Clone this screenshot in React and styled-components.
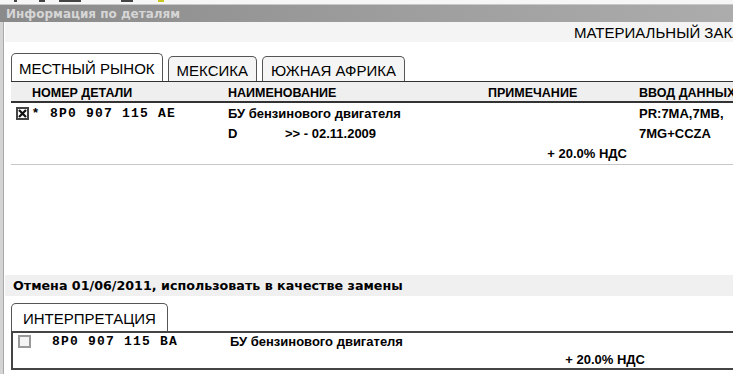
import React from "react";
import styled, { createGlobalStyle } from "styled-components";

const Global = createGlobalStyle`
  html, body { margin: 0; padding: 0; background: #ffffff; }
  body { font-family: "Liberation Sans", Arial, sans-serif; color: #000; }
  * { box-sizing: border-box; }
`;

const Window = styled.div`
  width: 733px;
  height: 374px;
  overflow: hidden;
  display: flex;
  flex-direction: column;
  background: #fff;
`;

const TopStrip = styled.div`
  height: 5px;
  display: flex;
  align-items: flex-start;
  background: #f6f6f6;
  border-bottom: 1px solid #c8c8c8;
  padding-left: 14px;
`;

const Mark = styled.span`
  display: block;
  height: 2px;
  width: ${(p) => p.$w}px;
  margin-left: ${(p) => p.$gap}px;
  background: ${(p) => p.$c || "#444"};
`;

const TitleBar = styled.div`
  height: 17px;
  display: flex;
  align-items: center;
  padding-left: 6px;
  background: linear-gradient(to right, #8a8a8a, #9c9c9c 50%, #acacac);
  color: #d6d6d6;
  font-family: "DejaVu Sans", Verdana, sans-serif;
  font-weight: bold;
  font-size: 12px;
  white-space: nowrap;
`;

const Frame = styled.div`
  flex: 1;
  display: flex;
  flex-direction: column;
  border-left: 3px solid #d4d4d4;
  box-shadow: inset 1px 0 0 #a8a8a8;
  padding-left: 2px;
`;

const InfoBar = styled.div`
  height: 20px;
  display: flex;
  align-items: center;
  padding-left: 569px;
  background: #f4f4f4;
  font-size: 15px;
  white-space: nowrap;
  overflow: hidden;
`;

const Content = styled.div`
  display: flex;
  flex-direction: column;
  padding-left: 6px;
`;

const TabRow = styled.div`
  display: flex;
  align-items: flex-end;
  gap: 5px;
  margin-top: ${(p) => p.$top || 0}px;
  height: 28px;
`;

const Tab = styled.div`
  height: ${(p) => (p.$active ? 28 : 25)}px;
  display: flex;
  align-items: center;
  padding: 0 ${(p) => p.$px || 8}px;
  border: 1px solid #555;
  border-bottom: none;
  border-radius: 5px 5px 0 0;
  background: ${(p) => (p.$active ? "#ffffff" : "#f5f5f5")};
  font-size: 15px;
  white-space: nowrap;
  padding-top: ${(p) => (p.$active ? 1 : 2)}px;
`;

const Table = styled.div`
  display: flex;
  flex-direction: column;
  border-top: 1px solid #333;
`;

const cols = "39px 178px 260px 151px 220px";

const HeaderRow = styled.div`
  height: 21px;
  display: grid;
  grid-template-columns: ${cols};
  align-items: center;
  background: #efefef;
  border-bottom: 2px solid #333;
  font-size: 12.5px;
  font-weight: bold;
  white-space: nowrap;
`;

const HeadCell = styled.div`
  grid-column: ${(p) => p.$span || "auto"};
  padding-left: ${(p) => p.$pad || 0}px;
  padding-top: 2px;
`;

const DataBlock = styled.div`
  display: flex;
  flex-direction: column;
  padding-bottom: 1px;
  border-bottom: 1px solid #c8c8c8;
`;

const Row = styled.div`
  height: ${(p) => p.$h || 20}px;
  display: grid;
  grid-template-columns: ${cols};
  align-items: center;
  font-size: 13px;
  font-weight: bold;
  white-space: nowrap;
`;

const CheckCell = styled.div`
  display: flex;
  align-items: center;
  gap: 4px;
  padding-left: 5px;
`;

const Box = styled.span`
  width: 13px;
  height: 13px;
  display: inline-flex;
  align-items: center;
  justify-content: center;
  border: 2px solid ${(p) => (p.$checked ? "#444" : "#999")};
  background: ${(p) => (p.$checked ? "#fff" : "#f4f4f4")};
`;

const Star = styled.span`
  font-size: 13px;
  line-height: 1;
  margin-top: -2px;
`;

const PartNo = styled.div`
  font-family: "Liberation Mono", "Courier New", monospace;
  font-weight: bold;
  font-size: 13px;
  letter-spacing: 1.2px;
`;

const NameCell = styled.div`
  display: flex;
`;

const Suffix = styled.span`
  width: 57px;
`;

const Tax = styled.div`
  grid-column: ${(p) => p.$col};
  justify-self: end;
  padding-right: ${(p) => p.$pr}px;
`;

const Notice = styled.div`
  margin-top: 110px;
  margin-left: -6px;
  height: 21px;
  display: flex;
  align-items: center;
  padding-left: 8px;
  background: #f0f0f0;
  font-family: "DejaVu Sans", Verdana, sans-serif;
  font-weight: bold;
  font-size: 12.7px;
  white-space: nowrap;
`;

const Panel = styled.div`
  display: flex;
  flex-direction: column;
  border: 2px solid #444;
  border-right: none;
  height: 39px;
`;

const lowerCols = "39px 178px 260px 168px 200px";

const LowerRow = styled(Row)`
  grid-template-columns: ${lowerCols};
  height: ${(p) => p.$h}px;
`;

function Check({ checked }) {
  return (
    <Box $checked={checked}>
      {checked && (
        <svg width="9" height="9" viewBox="0 0 9 9">
          <path d="M1 1 L8 8 M8 1 L1 8" stroke="#111" strokeWidth="2.2" />
        </svg>
      )}
    </Box>
  );
}

export default function App() {
  return (
    <>
      <Global />
      <Window>
        <TopStrip>
          <Mark $w={3} $gap={0} />
          <Mark $w={6} $gap={22} />
          <Mark $w={22} $gap={14} />
          <Mark $w={12} $gap={40} />
          <Mark $w={6} $gap={25} $c="#c8c820" />
        </TopStrip>
        <TitleBar>Информация по деталям</TitleBar>
        <Frame>
          <InfoBar>МАТЕРИАЛЬНЫЙ ЗАКАЗ</InfoBar>
          <Content>
            <TabRow $top={11}>
              <Tab $active $px={7}>МЕСТНЫЙ РЫНОК</Tab>
              <Tab $px={8}>МЕКСИКА</Tab>
              <Tab $px={8}>ЮЖНАЯ АФРИКА</Tab>
            </TabRow>
            <Table>
              <HeaderRow>
                <HeadCell $span="1 / 3" $pad={21}>НОМЕР ДЕТАЛИ</HeadCell>
                <HeadCell>НАИМЕНОВАНИЕ</HeadCell>
                <HeadCell>ПРИМЕЧАНИЕ</HeadCell>
                <HeadCell>ВВОД ДАННЫХ</HeadCell>
              </HeaderRow>
              <DataBlock>
                <Row>
                  <CheckCell>
                    <Check checked />
                    <Star>*</Star>
                  </CheckCell>
                  <PartNo>8P0 907 115 AE</PartNo>
                  <NameCell>БУ бензинового двигателя</NameCell>
                  <div />
                  <div>PR:7MA,7MB,</div>
                </Row>
                <Row>
                  <div />
                  <div />
                  <NameCell>
                    <Suffix>D</Suffix>
                    <span>&gt;&gt; - 02.11.2009</span>
                  </NameCell>
                  <div />
                  <div>7MG+CCZA</div>
                </Row>
                <Row>
                  <Tax $col="4" $pr={12}>+ 20.0% НДС</Tax>
                </Row>
              </DataBlock>
            </Table>
            <Notice>Отмена 01/06/2011, использовать в качестве замены</Notice>
            <TabRow $top={7}>
              <Tab $active $px={11}>ИНТЕРПРЕТАЦИЯ</Tab>
            </TabRow>
            <Panel>
              <LowerRow $h={18}>
                <CheckCell>
                  <Check />
                </CheckCell>
                <PartNo>8P0 907 115 BA</PartNo>
                <NameCell>БУ бензинового двигателя</NameCell>
              </LowerRow>
              <LowerRow $h={18}>
                <Tax $col="4" $pr={13}>+ 20.0% НДС</Tax>
              </LowerRow>
            </Panel>
          </Content>
        </Frame>
      </Window>
    </>
  );
}
